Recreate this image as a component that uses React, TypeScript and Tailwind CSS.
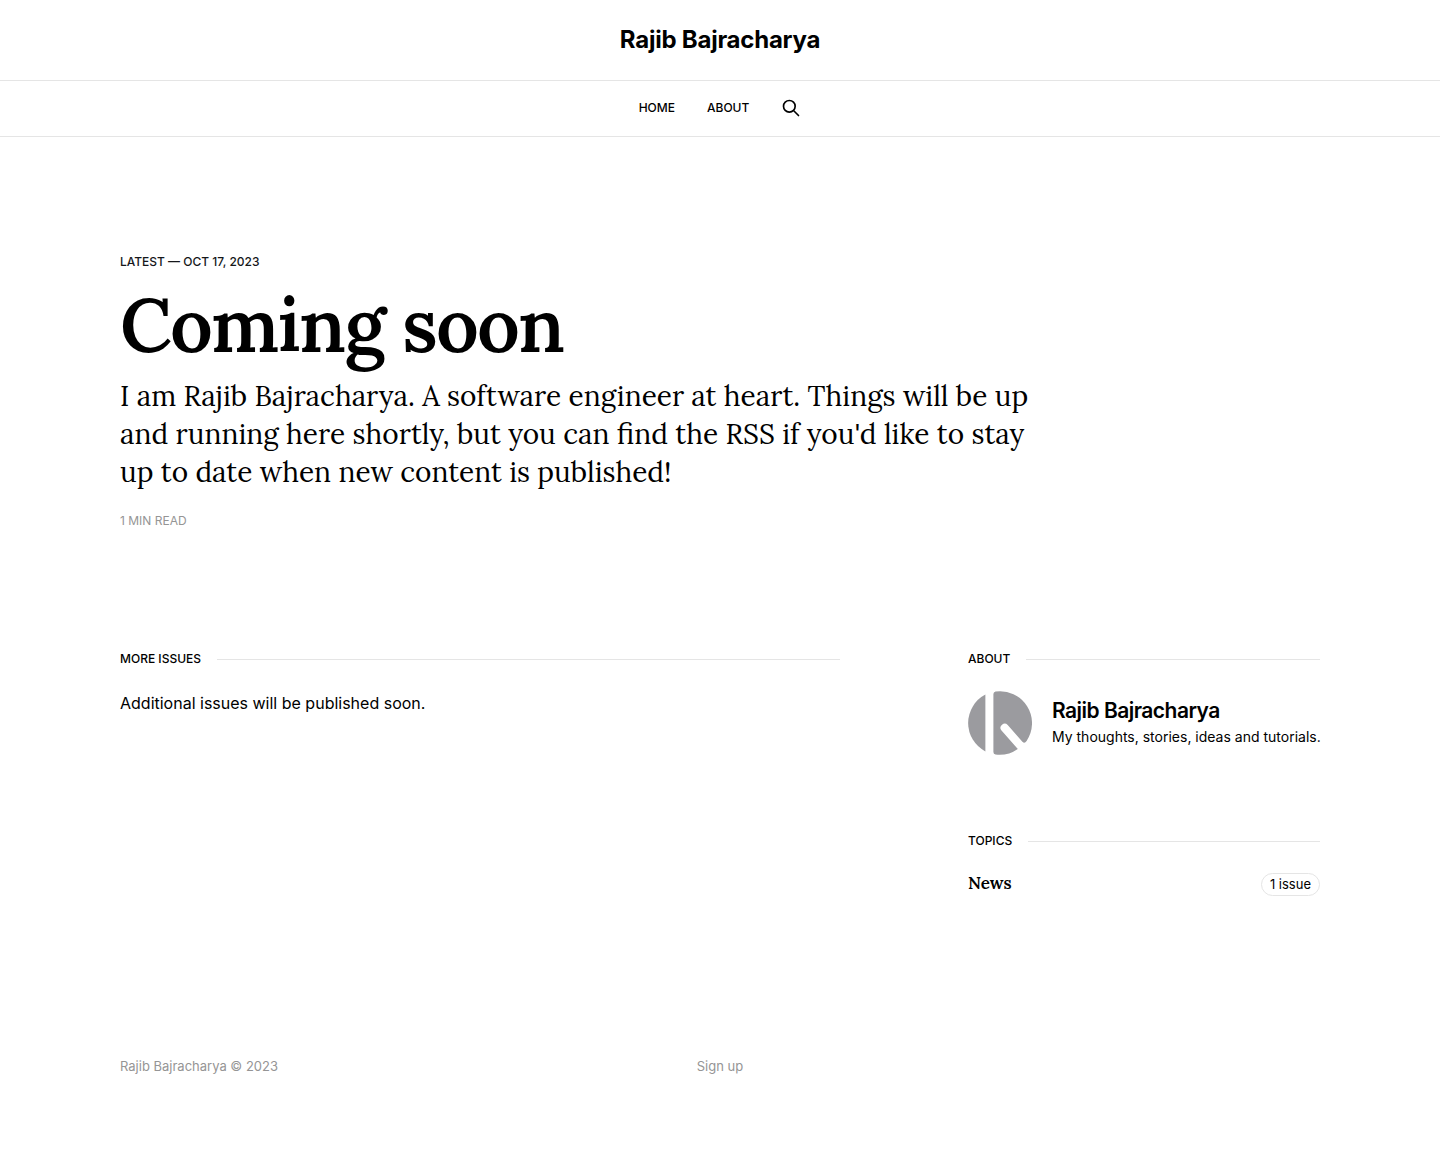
import type { ReactNode } from "react";

function SectionTitle({ children }: { children: ReactNode }) {
  return (
    <h2 className="flex items-center gap-4 text-xs leading-4 font-medium uppercase after:h-px after:grow after:bg-[#e5e5e5]">
      {children}
    </h2>
  );
}

function Logo() {
  return (
    <svg viewBox="0 0 64 64" className="size-16 shrink-0" aria-hidden="true">
      <path fill="#9b9b9f" d="M17.4 3.6V60.4A32 32 0 0 1 17.4 3.6Z" />
      <path
        fill="#9b9b9f"
        d="M25.4 3Q25.4 1 27.5 .5A32 32 0 0 1 58.6 50Q56.6 53 54.4 50.7L39.7 33.9A4.2 4.2 0 0 0 33.3 39.3L49.8 57.9A32 32 0 0 1 27.5 63.5Q25.4 63 25.4 61Z"
      />
    </svg>
  );
}

export default function App() {
  return (
    <div className="bg-white font-['Inter',sans-serif] text-black">
      <header>
        <div className="flex h-20 items-center justify-center">
          <a href="#" className="text-2xl leading-6 font-bold tracking-[-0.01em]">Rajib Bajracharya</a>
        </div>
        <nav className="flex h-[57px] items-center justify-center gap-8 border-y border-[#e5e5e5] pb-0.5 text-xs font-medium uppercase">
          <a href="#">Home</a>
          <a href="#about">About</a>
          <button type="button" aria-label="Search" className="flex size-5 items-center justify-center">
            <svg viewBox="0 0 24 24" fill="none" stroke="currentColor" strokeWidth="2" strokeLinecap="round" strokeLinejoin="round" className="size-5">
              <path d="M21 21l-6-6m2-5a7 7 0 11-14 0 7 7 0 0114 0z" />
            </svg>
          </button>
        </nav>
      </header>

      <main className="mx-auto max-w-[1296px] px-12">
        <article className="max-w-[920px] pt-[117px]">
          <div className="text-xs leading-4 font-medium text-[#15171a] uppercase">Latest — <time dateTime="2023-10-17">Oct 17, 2023</time></div>
          <h1 className="mt-4 font-['Lora',serif] text-[75px] leading-[79px] font-semibold tracking-tight">Coming soon</h1>
          <p className="mt-3 font-['Lora',serif] text-[28px] leading-[38px]">
            I am Rajib Bajracharya. A software engineer at heart. Things will be up and running here shortly, but you can find the RSS if you'd like to stay up to date when new content is published!
          </p>
          <div className="mt-[22px] text-xs leading-4 text-[#959595] uppercase">1 min read</div>
        </article>

        <div className="mt-[122px] grid grid-cols-[1fr_352px] gap-32">
          <section>
            <SectionTitle>More issues</SectionTitle>
            <p className="mt-6 text-base leading-6">Additional issues will be published soon.</p>
          </section>
          <aside>
            <section id="about">
              <SectionTitle>About</SectionTitle>
              <div className="mt-6 flex items-center gap-5">
                <Logo />
                <div>
                  <div className="text-[21px] leading-6 font-semibold tracking-tight">Rajib Bajracharya</div>
                  <div className="mt-1 text-sm leading-5 whitespace-nowrap">My thoughts, stories, ideas and tutorials.</div>
                </div>
              </div>
            </section>
            <section className="mt-[78px]">
              <SectionTitle>Topics</SectionTitle>
              <a href="#" className="mt-6 flex items-start justify-between">
                <span className="font-['Lora',serif] text-[17px] leading-5 font-semibold">News</span>
                <span className="rounded-full border border-[#e5e5e5] px-2 text-[13px] leading-[21px]">1 issue</span>
              </a>
            </section>
          </aside>
        </div>
      </main>

      <footer className="mx-auto mt-[160px] grid max-w-[1296px] grid-cols-[1fr_auto_1fr] px-12 pb-20 text-[13px] leading-5 text-[#959595]">
        <span>Rajib Bajracharya © 2023</span>
        <a href="#">Sign up</a>
      </footer>
    </div>
  );
}
